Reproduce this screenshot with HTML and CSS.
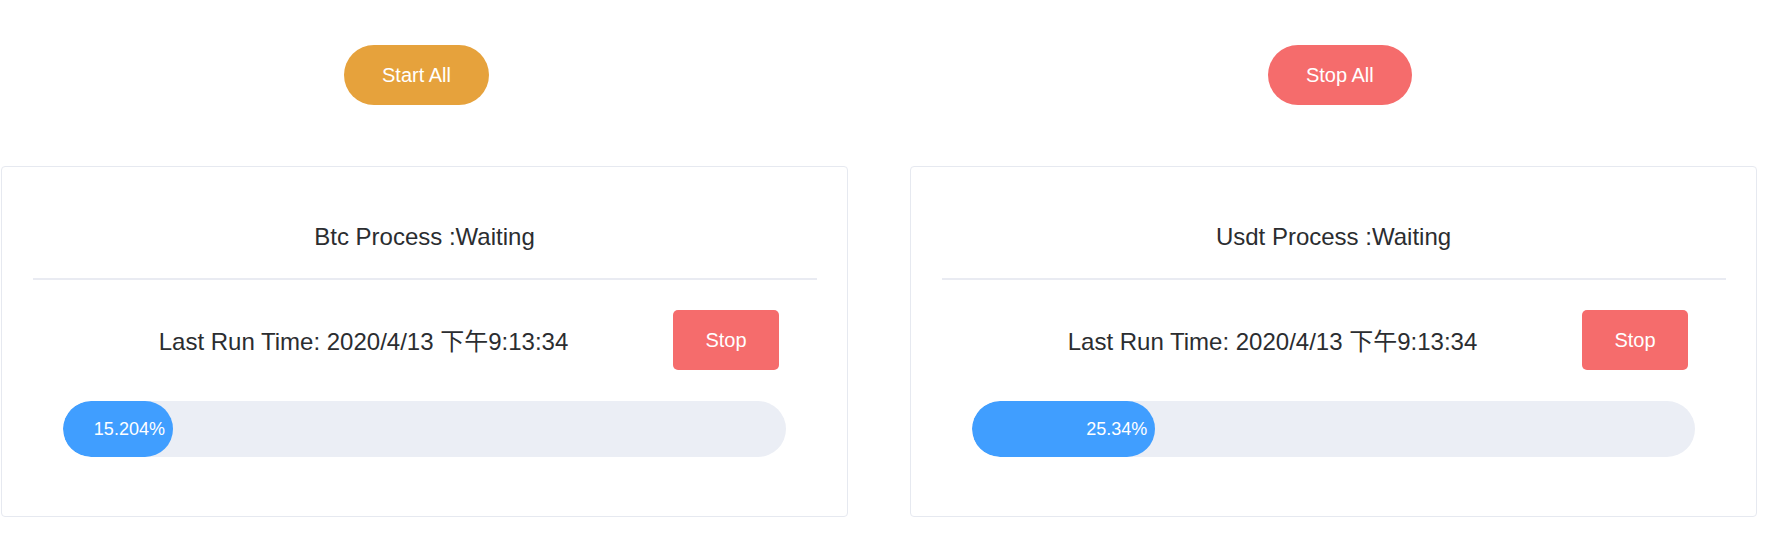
FILE: index.html
```html
<!DOCTYPE html>
<html lang="zh-CN">
<head>
<meta charset="utf-8">
<title>Process</title>
<link rel="stylesheet" href="styles.css">
</head>
<body>
<div class="page">
  <div class="top-actions">
    <button class="round-btn warning">Start All</button>
    <button class="round-btn danger">Stop All</button>
  </div>
  <div class="cards">
    <div class="card">
      <div class="card-title">Btc Process :Waiting</div>
      <div class="divider"></div>
      <div class="run-row">
        <div class="run-text">Last Run Time: 2020/4/13 下午9:13:34</div>
        <button class="stop-btn">Stop</button>
      </div>
      <div class="progress">
        <div class="progress-fill" style="width: 15.204%"><span class="progress-text">15.204%</span></div>
      </div>
    </div>
    <div class="card">
      <div class="card-title">Usdt Process :Waiting</div>
      <div class="divider"></div>
      <div class="run-row">
        <div class="run-text">Last Run Time: 2020/4/13 下午9:13:34</div>
        <button class="stop-btn">Stop</button>
      </div>
      <div class="progress">
        <div class="progress-fill" style="width: 25.34%"><span class="progress-text">25.34%</span></div>
      </div>
    </div>
  </div>
</div>
</body>
</html>
```
FILE: styles.css
```css
html, body {
  margin: 0;
  padding: 0;
  background: #ffffff;
}
body {
  font-family: "Liberation Sans", Arial, "Noto Sans CJK SC", sans-serif;
  color: #2b2d30;
}
.page {
  padding: 45px 0 0 1px;
}
.top-actions {
  display: flex;
  padding-left: 343px;
  gap: 779px;
}
.round-btn {
  height: 60px;
  padding: 0 38px;
  border: none;
  border-radius: 30px;
  color: #ffffff;
  font-family: inherit;
  font-size: 20px;
  line-height: 60px;
}
.warning { background: #e6a23c; }
.danger { background: #f56c6c; }
.cards {
  display: flex;
  gap: 62px;
  margin-top: 61px;
}
.card {
  box-sizing: border-box;
  width: 847px;
  border: 1px solid #e6e9f0;
  border-radius: 4px;
  background: #ffffff;
  padding: 56px 0 59px;
}
.card-title {
  text-align: center;
  font-size: 24px;
  line-height: 28px;
}
.divider {
  height: 2px;
  background: #e9ebf2;
  margin: 27px 30px 0 31px;
}
.run-row {
  display: flex;
  align-items: center;
  margin: 30px 61px 0;
  padding-right: 7px;
}
.run-text {
  flex: 1;
  text-align: center;
  font-size: 24px;
  line-height: 28px;
  padding: 3px 9px 0 0;
}
.stop-btn {
  width: 106px;
  height: 60px;
  border: none;
  border-radius: 5px;
  background: #f56c6c;
  color: #ffffff;
  font-family: inherit;
  font-size: 20px;
}
.progress {
  margin: 31px 61px 0;
  height: 56px;
  border-radius: 28px;
  background: #ebeef5;
  overflow: hidden;
}
.progress-fill {
  height: 100%;
  border-radius: 28px;
  background: #409eff;
  display: flex;
  align-items: center;
  justify-content: flex-end;
}
.progress-text {
  color: #ffffff;
  font-size: 18px;
  padding-right: 8px;
}
```
